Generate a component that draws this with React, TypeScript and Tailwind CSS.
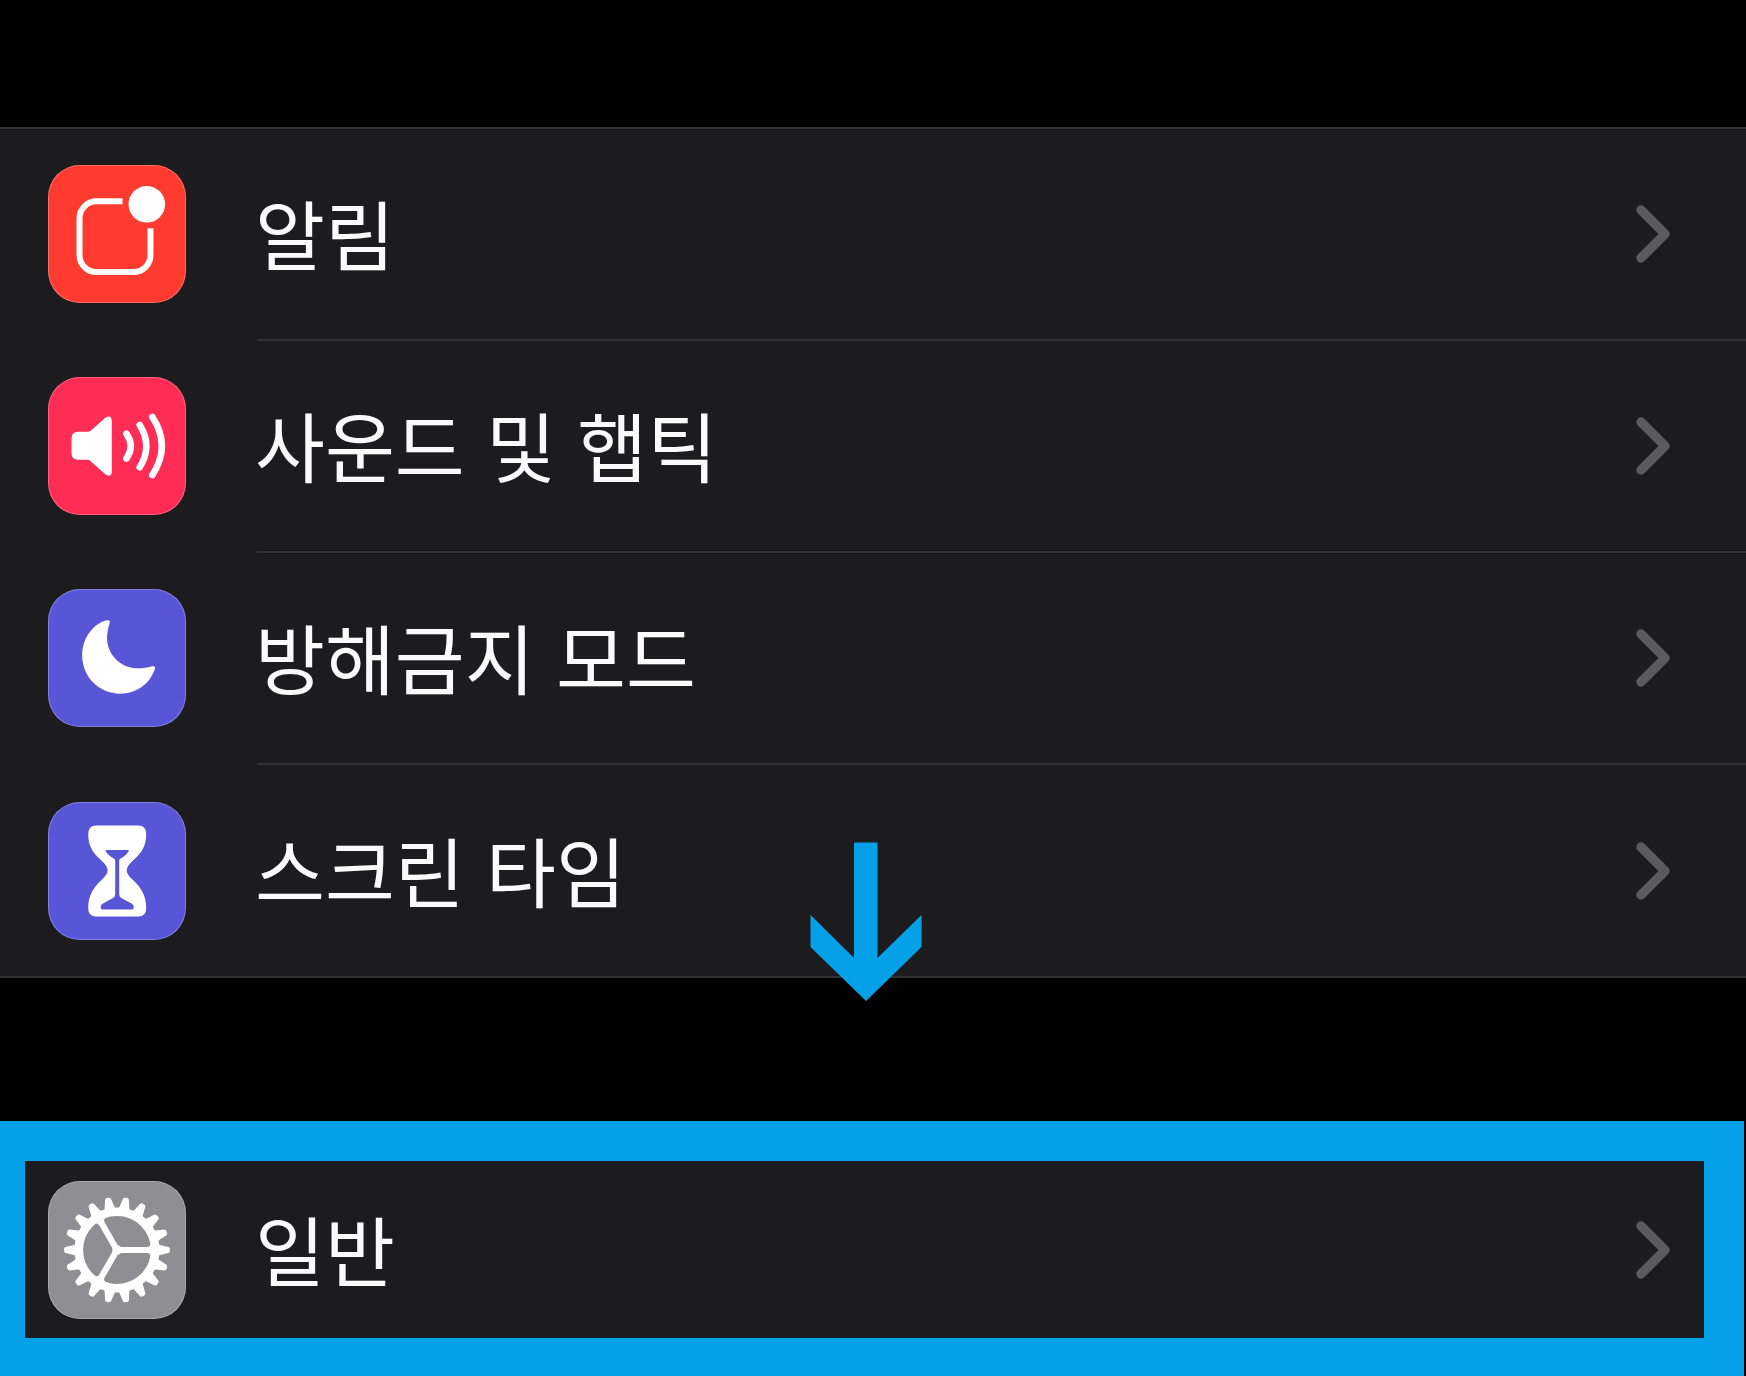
import type { ReactNode } from "react";

function NotificationsIcon() {
  return (
    <svg viewBox="0 0 138 138" className="size-full" fill="none" aria-hidden="true">
      <path
        d="M74.5 36.3H48.5a17 17 0 0 0-17 17V90a17 17 0 0 0 17 17h37a17 17 0 0 0 17-17V63.3"
        stroke="white"
        strokeWidth="6"
      />
      <circle cx="98.8" cy="39.3" r="18.3" fill="white" />
    </svg>
  );
}

function SoundIcon() {
  return (
    <svg viewBox="0 0 138 138" className="size-full" fill="none" aria-hidden="true">
      <path
        d="M30 54.8H39.5Q41.5 54.8 43 53.4L57 41Q59.5 39 61.2 39.6Q63.8 40.4 63.8 44V94.5Q63.8 98 61.2 98.7Q59.5 99.2 57 97L43 84.4Q41.5 82.8 39.5 82.8H30Q23.5 82.8 23.5 76.3V61.3Q23.5 54.8 30 54.8Z"
        fill="white"
      />
      <g stroke="white" strokeWidth="6.6" strokeLinecap="round">
        <path d="M78.4 56.8Q87.2 69 78.4 81.6" />
        <path d="M91.7 48Q105 69 91.7 90.3" />
        <path d="M104.3 39.9Q123.4 69 104.3 98.1" />
      </g>
    </svg>
  );
}

function MoonIcon() {
  return (
    <svg viewBox="0 0 138 138" className="size-full" aria-hidden="true">
      <path
        d="M60 31.2Q62.6 31.2 61.6 34.4C57 48 58.5 60 67 69.2C76 79.6 90 81.4 104 77.3Q107.8 76.6 106.8 80C102 95 88 104.7 72.2 104.7C51 104.7 34.2 88 34.2 66.6C34.2 50 44 36 57.5 31.6Q59 31.1 60 31.2Z"
        fill="white"
      />
    </svg>
  );
}

function HourglassIcon() {
  return (
    <svg viewBox="0 0 138 138" className="size-full" aria-hidden="true">
      <path
        fill="white"
        fillRule="evenodd"
        d="M48 23.5H90.5Q98.2 23.5 98.2 32C98.2 44 93.5 51 86 57.5C76.5 66 76.5 70.5 85 78C93.5 86 98.2 94 98.2 106Q98.2 114.5 90.5 114.5H48Q40.2 114.5 40.2 106C40.2 94 45 86 53.4 78C61.9 70.5 61.9 66 52.4 57.5C45 51 40.2 44 40.2 32Q40.2 23.5 48 23.5ZM58.2 48Q57 48 57.8 49.5C60 53 63 55 65.8 56.5Q67.2 57.2 67.2 59V92.5Q67.2 94.5 65.5 95.7L54.5 101.8Q52.6 103 52.6 105.2Q52.6 107.5 55 107.5H83.4Q85.800 107.5 85.8 105.2Q85.8 103 83.9 101.8L72.9 95.7Q71.2 94.5 71.2 92.5V59Q71.2 57.2 72.6 56.5C75.4 55 78.4 53 80.6 49.5Q81.4 48 80.2 48Z"
      />
    </svg>
  );
}

const toothAngles = Array.from({ length: 18 }, (_, i) => i * 20);
const spokeAngles = [0, 120, 240];

function GearIcon() {
  return (
    <svg viewBox="0 0 138 138" className="size-full" fill="none" aria-hidden="true">
      <circle cx="69" cy="69" r="38.2" stroke="white" strokeWidth="8.6" />
      {toothAngles.map((angle) => (
        <path
          key={angle}
          d="M109 62.6L112 64L120.6 66Q122 66.4 122 69Q122 71.6 120.6 72L112 74L109 75.400Z"
          fill="white"
          transform={`rotate(${angle} 69 69)`}
        />
      ))}
      {spokeAngles.map((angle) => (
        <path
          key={angle}
          d="M69 65.900H99Q102 65.900 103 62.500V75.500Q102 72.100 99 72.100H69Z"
          fill="white"
          transform={`rotate(${angle} 69 69)`}
        />
      ))}
      <circle cx="69" cy="69" r="4.800" fill="white" />
    </svg>
  );
}

function Chevron() {
  return (
    <svg viewBox="0 0 36 58" className="h-[58px] w-9 shrink-0" fill="none" aria-hidden="true">
      <path d="M6 5L30 29L6 53" stroke="#5b5b5f" strokeWidth="9.5" strokeLinecap="round" strokeLinejoin="round" />
    </svg>
  );
}

function AppIcon({ tone, children }: { tone: string; children: ReactNode }) {
  return (
    <span className={`block size-[138px] shrink-0 overflow-hidden rounded-[32px] ring-1 ring-inset ring-white/25 ${tone}`}>
      {children}
    </span>
  );
}

function Label({ children }: { children: ReactNode }) {
  return <span className="-ml-0.5 pb-1">{children}</span>;
}

const items = [
  { label: "알림", tone: "bg-[#ff3b30]", icon: <NotificationsIcon /> },
  { label: "사운드 및 햅틱", tone: "bg-[#ff2d55]", icon: <SoundIcon /> },
  { label: "방해금지 모드", tone: "bg-[#5856d6]", icon: <MoonIcon /> },
  { label: "스크린 타임", tone: "bg-[#5856d6]", icon: <HourglassIcon /> },
];

export default function App() {
  return (
    <main
      lang="ko"
      className="flex min-h-screen flex-col bg-black pt-[127px] font-['Noto_Sans_CJK_KR',sans-serif] text-[76px] leading-[104px] text-[#fafafa]"
    >
      <nav aria-label="설정" className="relative border-y-2 border-[#313133] bg-[#1c1c1e]">
        <ul>
          {items.map((item) => (
            <li key={item.label} className="group">
              <a href="#" className="flex gap-[71px] pl-12">
                <span className="flex items-center pb-0.5 group-last:pb-0">
                  <AppIcon tone={item.tone}>{item.icon}</AppIcon>
                </span>
                <span className="flex h-[212px] flex-1 items-center justify-between border-b-2 border-[#313133] pr-[75px] group-last:h-[211px] group-last:border-b-0">
                  <Label>{item.label}</Label>
                  <Chevron />
                </span>
              </a>
            </li>
          ))}
        </ul>
        <svg
          viewBox="0 0 112 160"
          className="pointer-events-none absolute left-[49.6%] top-[713px] h-40 w-28 -translate-x-1/2"
          aria-hidden="true"
        >
          <path d="M44 0.500H67.500V116L111.500 73V105L56 159L0.500 105V73L44 116Z" fill="#05a1e8" />
        </svg>
      </nav>

      <section className="mr-0.5 mt-[143px] border-b-[38px] border-l-[25px] border-r-[40px] border-t-[40px] border-[#05a1e8] bg-[#1c1c1e]">
        <a href="#" className="flex h-[177px] items-center gap-[71px] pl-[23px] pr-[33px]">
          <AppIcon tone="bg-[#8e8e93]">
            <GearIcon />
          </AppIcon>
          <span className="flex flex-1 items-center justify-between">
            <Label>일반</Label>
            <Chevron />
          </span>
        </a>
      </section>
    </main>
  );
}
